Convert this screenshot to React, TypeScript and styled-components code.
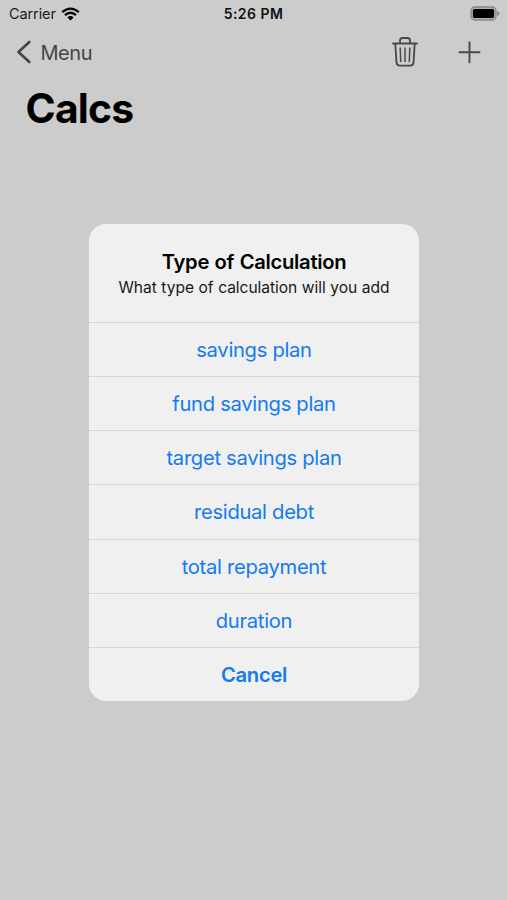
import React from "react";
import styled, { createGlobalStyle } from "styled-components";

const GlobalStyle = createGlobalStyle`
  * { box-sizing: border-box; }
  html, body, #root { margin: 0; height: 100%; }
  body { background: #cccccc; font-family: Inter, "Liberation Sans", sans-serif; }
  button { font: inherit; border: 0; padding: 0; background: none; }
`;

const Screen = styled.div`
  height: 100vh;
  overflow: hidden;
  background: #cccccc;
  color: #000;
`;

const StatusBar = styled.header`
  display: grid;
  grid-template-columns: 1fr auto 1fr;
  align-items: center;
  height: 27px;
  padding: 0 7px 0 9px;
`;

const Carrier = styled.div`
  display: flex;
  align-items: center;
  gap: 5px;
  font-size: 14.5px;
  line-height: 27px;
  letter-spacing: -0.1px;
  color: #1c1c1c;
`;

const Clock = styled.div`
  margin-right: 2px;
  font-size: 14px;
  font-weight: 600;
  line-height: 27px;
  letter-spacing: 0.45px;
  color: #111;
`;

const Battery = styled.svg`
  justify-self: end;
`;

const NavBar = styled.nav`
  display: flex;
  align-items: center;
  justify-content: space-between;
  height: 50px;
  padding: 0 26px 0 16px;
  color: #454545;
`;

const BackButton = styled.button`
  display: flex;
  align-items: center;
  gap: 8.5px;
  font-size: 20px;
  letter-spacing: -0.45px;
  color: #454545;
`;

const BackLabel = styled.span`
  padding-top: 2px;
`;

const Actions = styled.div`
  display: flex;
  align-items: center;
  gap: 40px;
`;

const IconButton = styled.button`
  display: flex;
  color: #484848;
`;

const Title = styled.h1`
  margin: 5px 0 0 25.5px;
  font-size: 40.8px;
  line-height: 52px;
  font-weight: 700;
  letter-spacing: -0.8px;
`;

const Dialog = styled.section`
  width: 330px;
  height: 477px;
  margin: 90px auto 0 89px;
  border-radius: 17px;
  overflow: hidden;
  background: #f0f0f0;
  text-align: center;
`;

const DialogHeader = styled.div`
  height: 98px;
  padding-top: 25px;
`;

const DialogTitle = styled.h2`
  margin: 0;
  font-size: 20.2px;
  line-height: 26px;
  font-weight: 600;
  letter-spacing: -0.3px;
  word-spacing: 0.8px;
`;

const Message = styled.p`
  margin: 0;
  font-size: 15.6px;
  line-height: 26px;
  letter-spacing: -0.06px;
  word-spacing: 0.3px;
  color: #181818;
`;

const Option = styled.button<{ $strong?: boolean }>`
  display: block;
  width: 100%;
  height: 54.15px;
  border-top: 1px solid #d7d7d7;
  font-size: 20.2px;
  font-weight: ${(p) => (p.$strong ? 600 : 400)};
  letter-spacing: -0.3px;
  color: #147bf0;
`;

const options = [
  "savings plan",
  "fund savings plan",
  "target savings plan",
  "residual debt",
  "total repayment",
  "duration",
];

export default function App() {
  return (
    <Screen>
      <GlobalStyle />
      <StatusBar>
        <Carrier>
          Carrier
          <svg width="19" height="14" viewBox="0 0 19 14" fill="none" stroke="#000" strokeWidth="2.3">
            <path d="M1.2 5.2Q9.5-2 17.8 5.2M4 8.2Q9.5 3.3 15 8.2" />
            <path d="M9.5 13.5 6.4 10.4Q9.5 7.8 12.6 10.4Z" fill="#000" stroke="none" />
          </svg>
        </Carrier>
        <Clock>5:26 PM</Clock>
        <Battery width="30" height="15" viewBox="0 0 30 15">
          <rect x="1" y="1" width="25" height="13" rx="3.8" fill="#b4b4b4" stroke="#858585" strokeWidth="1.3" />
          <rect x="2.9" y="2.9" width="21.2" height="9.2" rx="1.6" fill="#000" />
          <path d="M27.3 5v5q2.2-.7 2.2-2.5T27.3 5Z" fill="#858585" />
        </Battery>
      </StatusBar>
      <NavBar>
        <BackButton>
          <svg width="16" height="26" viewBox="0 0 16 26" fill="none" stroke="currentColor" strokeWidth="2.6" strokeLinecap="round" strokeLinejoin="round">
            <path d="M13.3 3 2.5 13l10.8 10" />
          </svg>
          <BackLabel>Menu</BackLabel>
        </BackButton>
        <Actions>
          <IconButton aria-label="Delete">
            <svg width="26" height="32" viewBox="0 0 26 32" fill="none" stroke="currentColor" strokeWidth="1.8" strokeLinecap="round" strokeLinejoin="round">
              <path d="M1 7.5h24M8 7V4.5Q8 2 10.5 2h5Q18 2 18 4.5V7M3.3 8l1.2 18.4Q4.7 29.6 7.8 29.6h10.4q3.1 0 3.3-3.2L22.7 8" />
              <path d="M8.2 12l.5 13.5M13 12v13.5M17.8 12l-.5 13.5" strokeWidth="1.5" />
            </svg>
          </IconButton>
          <IconButton aria-label="Add">
            <svg width="23" height="24" viewBox="0 0 23 24" fill="none" stroke="currentColor" strokeWidth="1.9" strokeLinecap="round">
              <path d="M1.5 12.3h20M11.5 2.3v20" />
            </svg>
          </IconButton>
        </Actions>
      </NavBar>
      <Title>Calcs</Title>
      <Dialog role="dialog" aria-label="Type of Calculation">
        <DialogHeader>
          <DialogTitle>Type of Calculation</DialogTitle>
          <Message>What type of calculation will you add</Message>
        </DialogHeader>
        {options.map((name) => (
          <Option key={name}>{name}</Option>
        ))}
        <Option $strong>Cancel</Option>
      </Dialog>
    </Screen>
  );
}
